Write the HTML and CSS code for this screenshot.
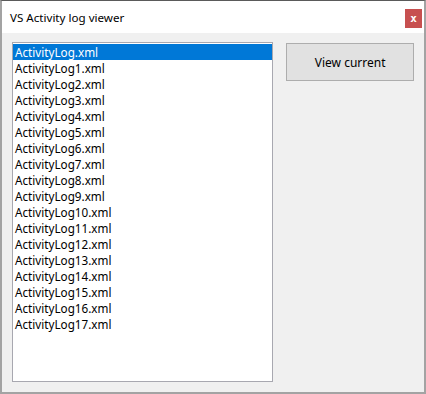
FILE: index.html
```html
<!DOCTYPE html>
<html lang="en">
<head>
<meta charset="UTF-8" />
<title>VS Activity log viewer</title>
<link rel="stylesheet" href="styles.css">
</head>
<body>
<div class="window">
  <header class="titlebar">
    <span class="title">VS Activity log viewer</span>
    <button class="close-btn" aria-label="Close">x</button>
  </header>
  <main class="content">
    <ul class="file-list" id="fileList">
      <li class="selected">ActivityLog.xml</li>
      <li>ActivityLog1.xml</li>
      <li>ActivityLog2.xml</li>
      <li>ActivityLog3.xml</li>
      <li>ActivityLog4.xml</li>
      <li>ActivityLog5.xml</li>
      <li>ActivityLog6.xml</li>
      <li>ActivityLog7.xml</li>
      <li>ActivityLog8.xml</li>
      <li>ActivityLog9.xml</li>
      <li>ActivityLog10.xml</li>
      <li>ActivityLog11.xml</li>
      <li>ActivityLog12.xml</li>
      <li>ActivityLog13.xml</li>
      <li>ActivityLog14.xml</li>
      <li>ActivityLog15.xml</li>
      <li>ActivityLog16.xml</li>
      <li>ActivityLog17.xml</li>
    </ul>
    <button class="view-btn">View current</button>
  </main>
</div>
</body>
</html>
```
FILE: styles.css
```css
:root{--frame:#a3a3a3;--face:#f0f0f0;--select:#0078d7;--btn:#e1e1e1;--btnborder:#adadad;}
*,*:before,*:after{box-sizing:border-box;}
html,body{margin:0;height:100%;}
body{font-family:'Noto Sans','Open Sans',sans-serif;font-size:12px;color:#000;background:var(--face);}
.window{height:394px;width:426px;display:flex;flex-direction:column;border-style:solid;border-color:#5a5a5a var(--frame) var(--frame) var(--frame);border-width:1px 2px 2px 2px;background:var(--face);}
.titlebar{height:32px;background:#fff;display:flex;align-items:center;justify-content:space-between;padding:0 2px 0 8px;}
.title{font-size:11.6px;color:#000;}
.close-btn{width:17px;height:19px;margin-top:2px;background:#c75050;border:none;color:#fff;font-family:'DejaVu Sans Mono',monospace;font-weight:700;font-size:11px;line-height:19px;padding:0;}
.content{flex:1;display:flex;align-items:flex-start;gap:13px;padding:9px 10px 0;}
ul.file-list{list-style:none;margin:0;padding:1px 0 0;width:262px;height:340px;background:#fff;border:1px solid #a8a8b0;}
ul.file-list li{height:16px;line-height:16px;padding-left:2px;white-space:nowrap;font-size:11.7px;}
ul.file-list li.selected{background:var(--select);color:#fff;}
.view-btn{width:128px;height:38px;margin-top:1px;background:var(--btn);border:1px solid var(--btnborder);font-family:inherit;font-size:12px;color:#000;padding:0;}
```
